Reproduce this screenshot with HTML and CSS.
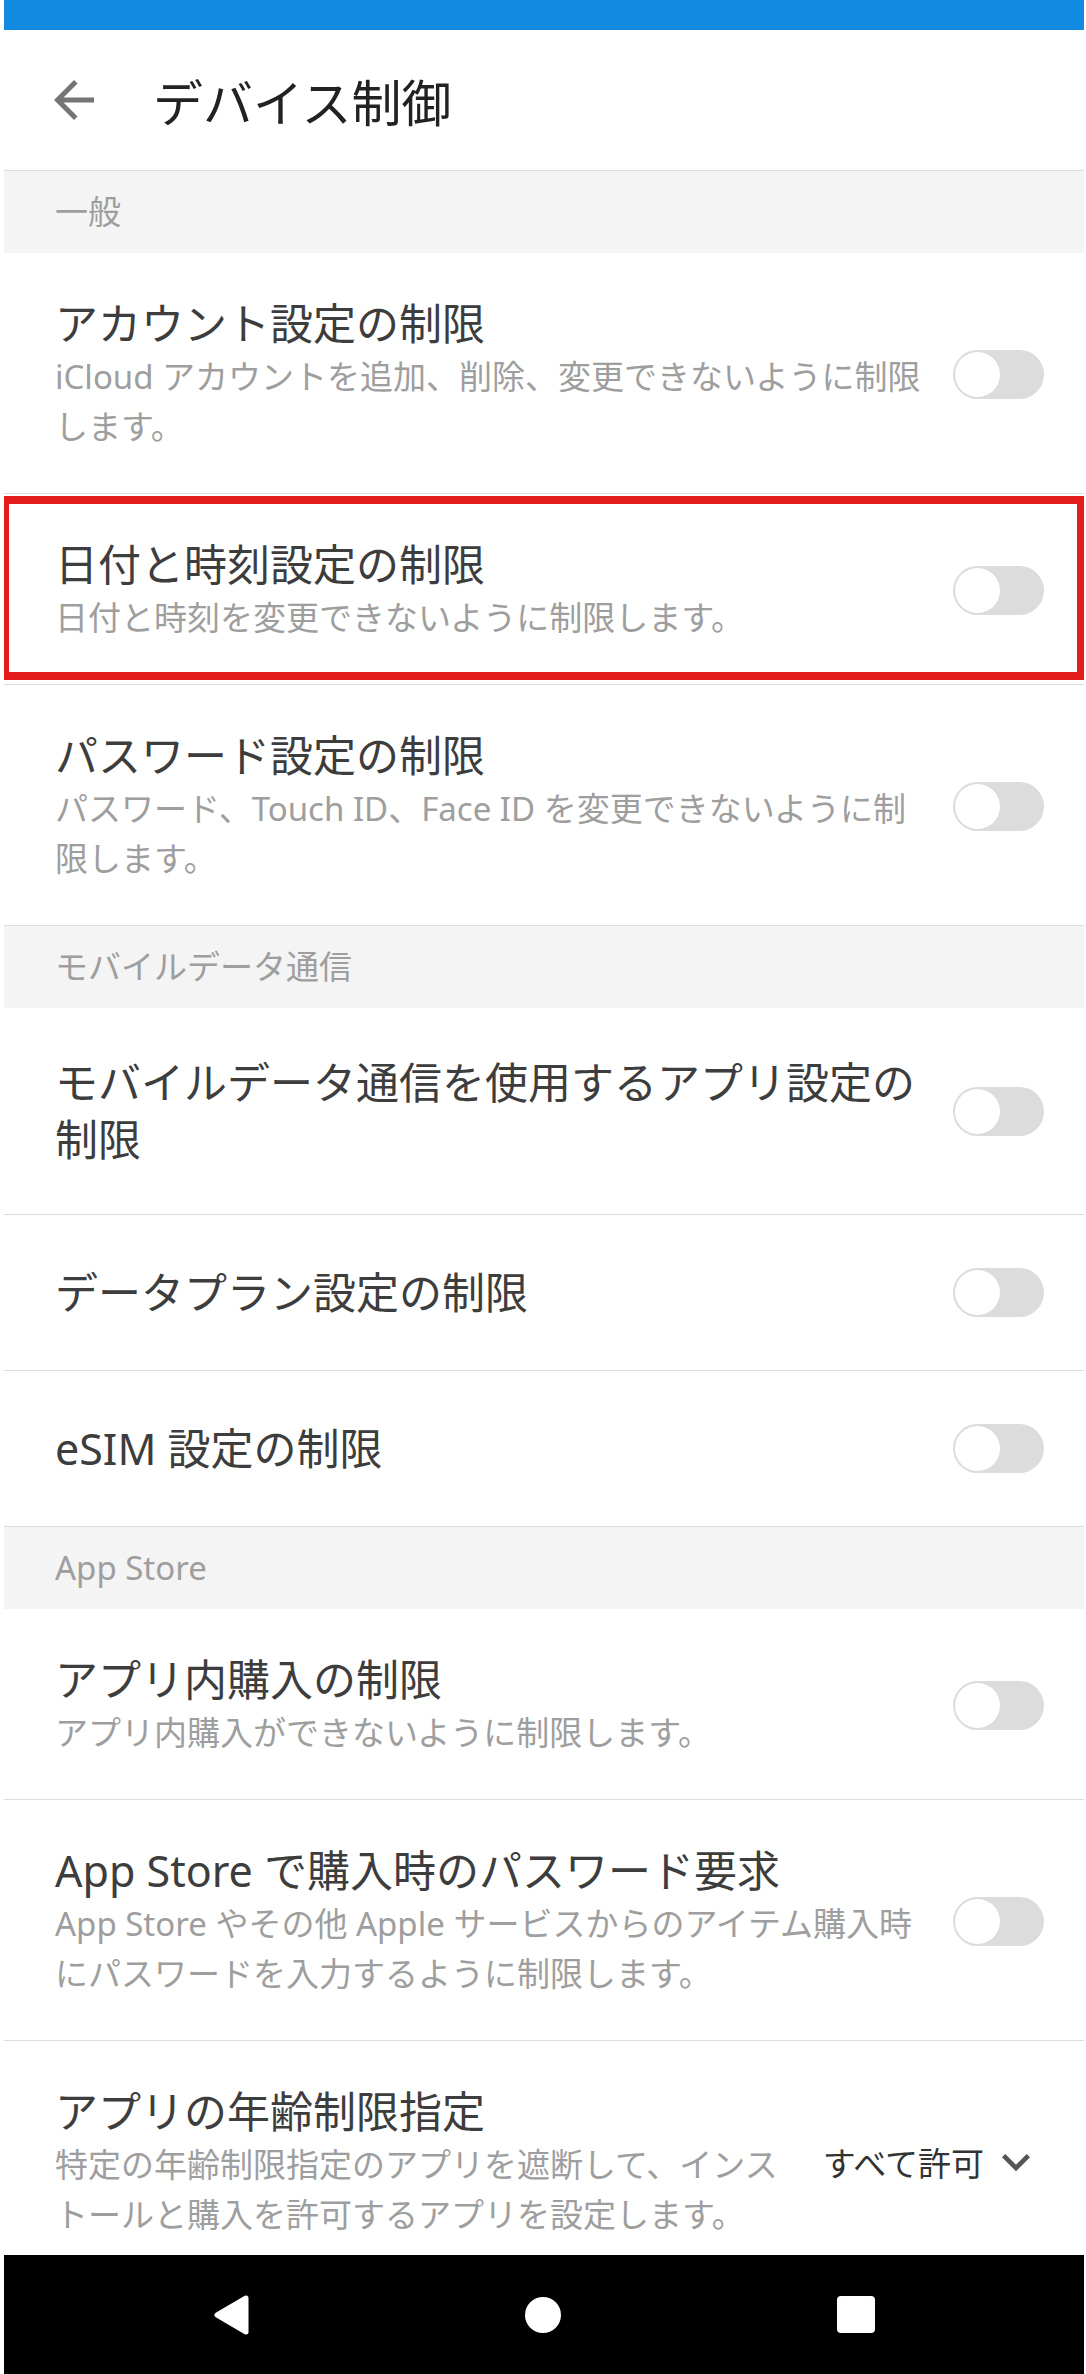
FILE: index.html
```html
<!DOCTYPE html>
<html lang="ja">
<head>
    <meta charset="UTF-8">
    <meta name="viewport" content="width=device-width, initial-scale=1.0">
    <title>デバイス制御</title>
    <link rel="stylesheet" href="styles.css">
</head>
<body>
    <div id="status-bar"></div>

    <div id="app-header">
        <svg class="back-icon" viewBox="0 0 24 24"><path d="M20 11H7.83l5.59-5.59L12 4l-8 8 8 8 1.41-1.41L7.83 13H20v-2z"/></svg>
        <h1>デバイス制御</h1>
    </div>

    <div class="section-title">一般</div>

    <div class="setting-row">
        <div class="setting-text">
            <div class="setting-name">アカウント設定の制限</div>
            <div class="setting-desc">iCloud アカウントを追加、削除、変更できないように制限します。</div>
        </div>
        <div class="switch"><div class="knob"></div></div>
    </div>

    <div class="setting-row marked">
        <div class="setting-text">
            <div class="setting-name">日付と時刻設定の制限</div>
            <div class="setting-desc">日付と時刻を変更できないように制限します。</div>
        </div>
        <div class="switch"><div class="knob"></div></div>
        <div class="mark-box"></div>
    </div>

    <div class="setting-row">
        <div class="setting-text">
            <div class="setting-name">パスワード設定の制限</div>
            <div class="setting-desc">パスワード、Touch ID、Face ID を変更できないように制限します。</div>
        </div>
        <div class="switch"><div class="knob"></div></div>
    </div>

    <div class="section-title">モバイルデータ通信</div>

    <div class="setting-row simple">
        <div class="setting-text">
            <div class="setting-name">モバイルデータ通信を使用するアプリ設定の制限</div>
        </div>
        <div class="switch"><div class="knob"></div></div>
    </div>

    <div class="setting-row simple">
        <div class="setting-text">
            <div class="setting-name">データプラン設定の制限</div>
        </div>
        <div class="switch"><div class="knob"></div></div>
    </div>

    <div class="setting-row simple">
        <div class="setting-text">
            <div class="setting-name">eSIM 設定の制限</div>
        </div>
        <div class="switch"><div class="knob"></div></div>
    </div>

    <div class="section-title">App Store</div>

    <div class="setting-row">
        <div class="setting-text">
            <div class="setting-name">アプリ内購入の制限</div>
            <div class="setting-desc">アプリ内購入ができないように制限します。</div>
        </div>
        <div class="switch"><div class="knob"></div></div>
    </div>

    <div class="setting-row">
        <div class="setting-text">
            <div class="setting-name">App Store で購入時のパスワード要求</div>
            <div class="setting-desc">App Store やその他 Apple サービスからのアイテム購入時にパスワードを入力するように制限します。</div>
        </div>
        <div class="switch"><div class="knob"></div></div>
    </div>

    <div class="setting-row">
        <div class="setting-text">
            <div class="setting-name">アプリの年齢制限指定</div>
            <div class="setting-desc">特定の年齢制限指定のアプリを遮断して、インストールと購入を許可するアプリを設定します。</div>
        </div>
        <div class="select">
            <span>すべて許可</span>
            <svg class="chevron" viewBox="0 0 24 24"><path d="M16.59 8.59L12 13.17 7.41 8.59 6 10l6 6 6-6z"/></svg>
        </div>
    </div>

    <div id="nav-bar">
        <svg class="nav-back" viewBox="0 0 35 40"><polygon points="32,3 32,37 3,20"/></svg>
        <div class="nav-home"></div>
        <div class="nav-recent"></div>
    </div>
</body>
</html>
```

FILE: styles.css
```css
body {
    margin: 0 2px 0 4px;
    font-family: "Noto Sans", "Noto Sans CJK JP", sans-serif;
    background: white;
    color: #3d3d3d;
}

/* Status bar */
#status-bar {
    height: 30px;
    background-color: #118be0;
}

/* Toolbar */
#app-header {
    display: flex;
    align-items: center;
    height: 140px;
    border-bottom: 1px solid #dddddd;
}

.back-icon {
    width: 60px;
    height: 60px;
    margin-left: 40px;
    fill: #757575;
}

#app-header h1 {
    margin: 0 0 0 49px;
    font-size: 50px;
    font-weight: normal;
    color: #222222;
}

/* Section headers */
.section-title {
    background-color: #f4f4f4;
    padding: 20px 0 20px 51px;
    font-size: 33px;
    line-height: 42px;
    color: #9e9e9e;
}

/* Setting rows */
.setting-row {
    position: relative;
    display: flex;
    align-items: center;
    gap: 26px;
    padding: 43px 40px 41px 51px;
    border-bottom: 1px solid #dddddd;
}

/* Rows with a title only */
.setting-row.simple {
    padding-top: 46px;
    padding-bottom: 46px;
    min-height: 63px;
}

.setting-row.simple .setting-name {
    line-height: 57px;
}

.setting-text {
    flex: 1;
}

.setting-name {
    font-size: 43px;
    line-height: 56px;
    color: #3d3d3d;
}

.setting-desc {
    font-size: 33px;
    line-height: 50px;
    color: #9e9e9e;
}

/* Toggle switch (off) */
.switch {
    width: 91px;
    height: 49px;
    padding: 2px;
    box-sizing: border-box;
    border-radius: 25px;
    background-color: #dcdcdc;
    flex-shrink: 0;
}

.knob {
    width: 45px;
    height: 45px;
    border-radius: 50%;
    background-color: white;
}

/* Dropdown */
.select {
    display: flex;
    align-items: center;
    gap: 4px;
    font-size: 33px;
    color: #333333;
    flex-shrink: 0;
}

.chevron {
    width: 56px;
    height: 56px;
    fill: #555555;
}

/* Red highlight around a row */
.mark-box {
    position: absolute;
    top: 2px;
    bottom: 4px;
    left: -3px;
    right: -1px;
    border: 8px solid #e31c1c;
}

/* Android navigation bar */
#nav-bar {
    position: fixed;
    left: 4px;
    right: 2px;
    bottom: 0;
    height: 119px;
    background-color: black;
    display: flex;
    align-items: center;
    justify-content: center;
    gap: 276px;
}

.nav-back {
    width: 35px;
    height: 40px;
    fill: white;
    stroke: white;
    stroke-width: 5;
    stroke-linejoin: round;
}

.nav-home {
    width: 36px;
    height: 36px;
    border-radius: 50%;
    background-color: white;
}

.nav-recent {
    width: 38px;
    height: 37px;
    border-radius: 4px;
    background-color: white;
}
```
